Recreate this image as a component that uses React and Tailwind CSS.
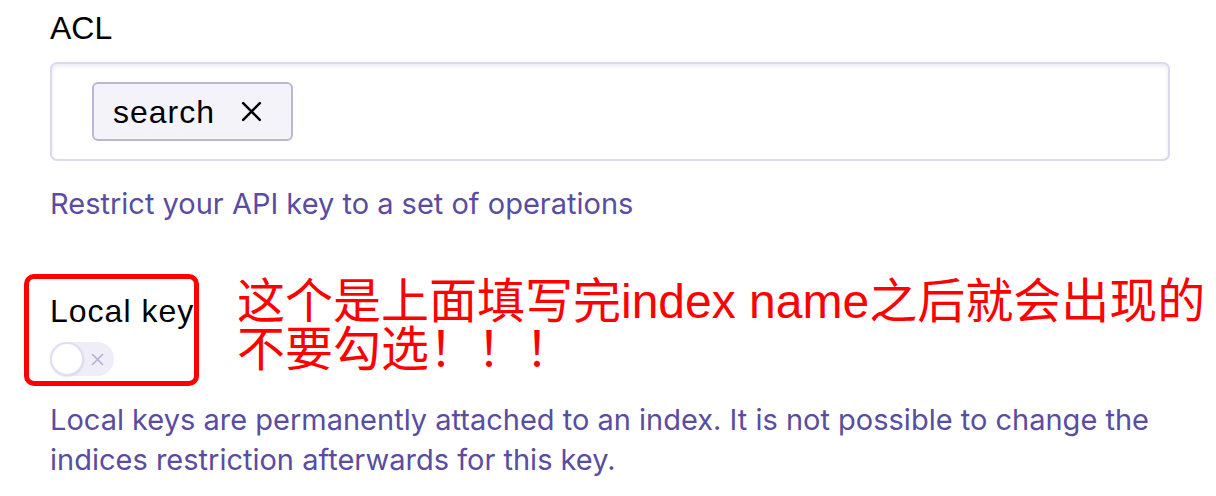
import React from 'react';

const labelFont = { fontFamily: '"Liberation Sans", Arial, sans-serif' };

const CrossIcon = ({ className, width = 2.4 }) => (
  <svg className={className} viewBox="0 0 24 24" fill="none" stroke="currentColor" strokeWidth={width} strokeLinecap="round">
    <path d="M4 4l16 16M20 4L4 20" />
  </svg>
);

const Toggle = () => (
  <div className="relative mt-[11px] flex h-[34px] w-[64px] items-center rounded-full bg-[#eeedf8]">
    <div className="h-[34px] w-[34px] shrink-0 rounded-full border-2 border-[#e0def2] bg-white shadow-[0_1px_2px_rgba(90,76,160,0.15)]"></div>
    <CrossIcon className="ml-[6px] h-[15px] w-[15px] text-[#b3afd6]" width={2.6} />
  </div>
);

export default function App() {
  return (
    <div className="min-h-[496px] w-[1216px] bg-white pl-[50px]">
      <div className="w-[1120px]">
        <div className="pt-[8px] text-[32px] leading-[40px] text-black" style={labelFont}>
          ACL
        </div>

        <div className="mt-[14px] h-[99px] rounded-[7px] border-2 border-[#dcd9ee] bg-white pl-[40px] pt-[18px] shadow-[inset_0_2px_4px_rgba(90,76,160,0.12)]">
          <div className="inline-flex h-[59px] items-center rounded-[6px] border-2 border-[#bab6da] bg-[#f4f3fa] pl-[19px] pr-[27px]">
            <span className="text-[32px] leading-[40px] tracking-[1px] text-black" style={labelFont}>
              search
            </span>
            <CrossIcon className="ml-[24px] h-[25px] w-[25px] text-black" />
          </div>
        </div>

        <p className="mt-[23px] font-['Inter'] text-[29px] leading-[40px] text-[#5a4ca0]">
          Restrict your API key to a set of operations
        </p>

        <div className="mt-[50px] flex items-start">
          <div className="-ml-[26px] h-[112px] w-[175px] shrink-0 rounded-[10px] border-[5px] border-[#ff0000] pl-[21px] pt-[12px]">
            <div className="whitespace-nowrap text-[32px] leading-[40px] tracking-[1px] text-black" style={labelFont}>
              Local key
            </div>
            <Toggle />
          </div>
          <div
            className="ml-[38px] mt-[4px] text-[48px] leading-[48px] text-[#ff0000]"
            style={{ fontFamily: '"Liberation Sans", "Noto Sans CJK SC", sans-serif' }}
          >
            <div className="whitespace-nowrap">这个是上面填写完index name之后就会出现的</div>
            <div className="whitespace-nowrap">不要勾选！！！</div>
          </div>
        </div>

        <p className="mt-[14px] font-['Inter'] text-[29px] leading-[40px] text-[#5a4ca0]">
          Local keys are permanently attached to an index. It is not possible to change the indices restriction afterwards for this key.
        </p>
      </div>
    </div>
  );
}
